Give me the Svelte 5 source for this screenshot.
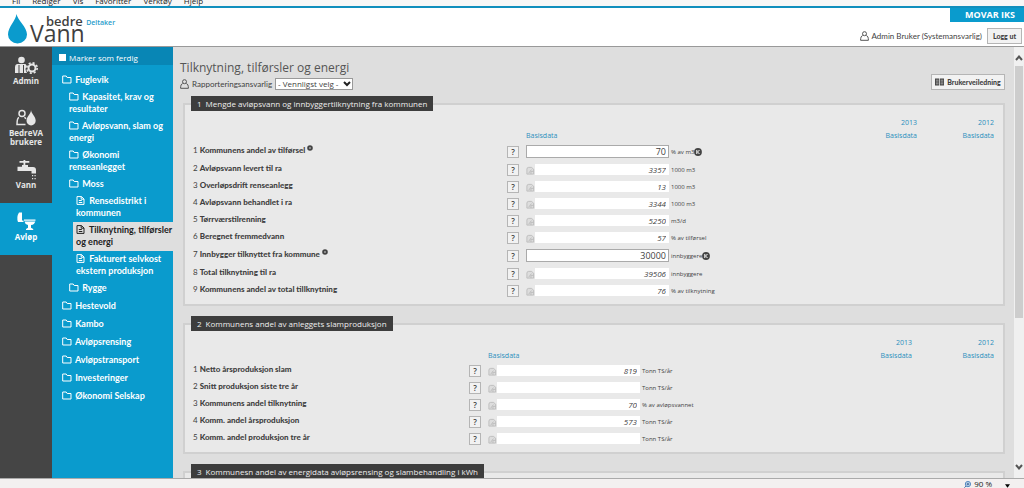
<script lang="ts">
    type Row = { label: string; value: string; unit: string; editable?: boolean };
    type Section = { title: string; layout: string; rows: Row[] };

    const browserMenu = ['Fil', 'Rediger', 'Vis', 'Favoritter', 'Verktøy', 'Hjelp'];

    const modules = [
        { name: 'Admin', icon: 'admin' },
        { name: 'BedreVA brukere', icon: 'users' },
        { name: 'Vann', icon: 'tap' },
        { name: 'Avløp', icon: 'toilet' }
    ];

    const tree = [
        { name: 'Fuglevik', level: 1 },
        { name: 'Kapasitet, krav og resultater', level: 2 },
        { name: 'Avløpsvann, slam og energi', level: 2 },
        { name: 'Økonomi renseanlegget', level: 2 },
        { name: 'Moss', level: 2 },
        { name: 'Rensedistrikt i kommunen', level: 3 },
        { name: 'Tilknytning, tilførsler og energi', level: 3 },
        { name: 'Fakturert selvkost ekstern produksjon', level: 3 },
        { name: 'Rygge', level: 2 },
        { name: 'Hestevold', level: 1 },
        { name: 'Kambo', level: 1 },
        { name: 'Avløpsrensing', level: 1 },
        { name: 'Avløpstransport', level: 1 },
        { name: 'Investeringer', level: 1 },
        { name: 'Økonomi Selskap', level: 1 }
    ];

    const sections: Section[] = [
        {
            title: 'Mengde avløpsvann og innbyggertilknytning fra kommunen',
            layout: 'wide',
            rows: [
                { label: 'Kommunens andel av tilførsel', value: '70', unit: '% av m3', editable: true },
                { label: 'Avløpsvann levert til ra', value: '3357', unit: '1000 m3' },
                { label: 'Overløpsdrift renseanlegg', value: '13', unit: '1000 m3' },
                { label: 'Avløpsvann behandlet i ra', value: '3344', unit: '1000 m3' },
                { label: 'Tørrværstilrenning', value: '5250', unit: 'm3/d' },
                { label: 'Beregnet fremmedvann', value: '57', unit: '% av tilførsel' },
                { label: 'Innbygger tilknyttet fra kommune', value: '30000', unit: 'innbyggere', editable: true },
                { label: 'Total tilknytning til ra', value: '39506', unit: 'innbyggere' },
                { label: 'Kommunens andel av total tillknytning', value: '76', unit: '% av tilknytning' }
            ]
        },
        {
            title: 'Kommunens andel av anleggets slamproduksjon',
            layout: 'narrow',
            rows: [
                { label: 'Netto årsproduksjon slam', value: '819', unit: 'Tonn TS/år' },
                { label: 'Snitt produksjon siste tre år', value: '', unit: 'Tonn TS/år' },
                { label: 'Kommunens andel tilknytning', value: '70', unit: '% av avløpsvannet' },
                { label: 'Komm. andel årsproduksjon', value: '573', unit: 'Tonn TS/år' },
                { label: 'Komm. andel produksjon tre år', value: '', unit: 'Tonn TS/år' }
            ]
        },
        {
            title: 'Kommunesn andel av energidata avløpsrensing og slambehandling i kWh',
            layout: 'narrow',
            rows: []
        }
    ];

    let active = 'Tilknytning, tilførsler og energi';
    let activeModule = 'Avløp';
    let done = false;
</script>

{#snippet person()}
    <svg class="person" viewBox="0 0 9 10" aria-hidden="true">
        <circle cx="4.5" cy="2.7" r="2" />
        <path d="M2.700 4.500C1.200 5 .6 6.500.6 9.300h7.800c0-2.800-.6-4.300-2.100-4.800" />
    </svg>
{/snippet}

<div class="app">
    <div class="browser-menu">
        {#each browserMenu as item}<span>{item}</span>{/each}
    </div>

    <header>
        <a class="logo" href="#hjem">
            <svg viewBox="0 0 20 30" aria-hidden="true">
                <path fill="#0a9bcd" d="M8.500 0C8 6 0 13 0 20.500A9.500 9 0 0 0 19 20.500C19 13 9.500 6 8.500 0Z" />
            </svg>
            <span class="wordmark">
                <span class="bedre">bedre <small>Deltaker</small></span>
                <span class="vann">Vann</span>
            </span>
        </a>
        <div class="account">
            <strong class="company">MOVAR IKS</strong>
            <div class="user">
                {@render person()}
                <span>Admin Bruker (Systemansvarlig)</span>
                <button class="logout">Logg ut</button>
            </div>
        </div>
    </header>

    <div class="body">
        <nav class="modules">
            {#each modules as module}
                <a href="#modul" class:active={module.name === activeModule} on:click|preventDefault={() => (activeModule = module.name)}>
                    <svg viewBox="0 0 24 20" aria-hidden="true">
                        {#if module.icon === 'admin'}
                            <circle cx="7.500" cy="4" r="3.300" />
                            <path d="M3 8h8.500q1 1 1 2.500-1.500 2-.5 4.500l1 2H1V11q0-2.500 2-3Z" />
                            <path d="M5 9v8M9.500 9v8" stroke="#454545" stroke-width="1" />
                            <circle cx="18" cy="12" r="3.500" fill="none" stroke="#e6e6e6" stroke-width="2" />
                            <circle cx="18" cy="12" r="5.200" fill="none" stroke="#e6e6e6" stroke-width="1.600" stroke-dasharray="2.080 2" />
                        {:else if module.icon === 'users'}
                            <circle cx="8" cy="5.500" r="3" fill="none" stroke="#e6e6e6" stroke-width="1.500" />
                            <path d="M5 9.500C3.300 10 3 12 3 16.500h8.500M10.500 9.200l1.500 1.600" fill="none" stroke="#e6e6e6" stroke-width="1.500" />
                            <path d="M17 2c0 4-4.500 6.500-4.500 10.800a4.600 4.700 0 0 0 9.200 0C21.700 8.500 17.500 6 17 2Z" />
                        {:else if module.icon === 'tap'}
                            <path d="M5.500 1h4V0h1.800v1h4v1.700h-4V5H14v2h5q3 0 3 3v3.500h-4.500V11h-14V6.800H8V5h1.500V2.700h-4Z" />
                            <path d="M18 15h1.200v1.200H18zM20.500 15h1.200v1.200h-1.200zM18 18h1.200v1.200H18zM20.500 18h1.200v1.200h-1.200z" />
                        {:else}
                            <path d="M5 .5h3v8H9.500V10H4Q2.200 5 5 .5Z" />
                            <path d="M10 7.500h11.500v1.300H10ZM10.500 9.400h10.800q-.8 3-4.300 3.700v2.600l2.200 1.300v1H12v-1l2-1.300v-2.600q-3-.7-3.500-3.700Z" />
                        {/if}
                    </svg>
                    <span>{module.name}</span>
                </a>
            {/each}
        </nav>

        <aside>
            <label class="mark-done"><input type="checkbox" bind:checked={done} /> Marker som ferdig</label>
            <ul>
                {#each tree as node}
                    <li class="level-{node.level}" class:selected={node.name === active}>
                        <a href="#side" on:click|preventDefault={() => (active = node.name)}>
                            {#if node.level === 3}
                                <svg viewBox="0 0 10 9" aria-hidden="true"><path d="M1 .6h4.500L8 3v5.400H1ZM5.200.6V3.200H8M2.800 4.500h3M2.800 6.500h3.500" /></svg>
                            {:else}
                                <svg viewBox="0 0 10 9" aria-hidden="true"><path d="M.7 8V1h3.500l1 1.500H9V8Z" /></svg>
                            {/if}
                            {node.name}
                        </a>
                    </li>
                {/each}
            </ul>
        </aside>

        <main>
            <div class="page-head">
                <div>
                    <h1>Tilknytning, tilførsler og energi</h1>
                    <div class="responsible">
                        {@render person()}
                        <label for="responsible">Rapporteringsansvarlig</label>
                        <span class="select">
                            <select id="responsible">
                                <option>- Vennligst velg -</option>
                            </select>
                            <svg viewBox="0 0 8 6" aria-hidden="true"><path d="M1 1l3 3 3-3" /></svg>
                        </span>
                    </div>
                </div>
                <button class="guide">
                    <svg viewBox="0 0 10 8" aria-hidden="true">
                        <path fill="#444" d="M0 0h4.600v8H0zM5.400 0H10v8H5.400z" />
                        <path stroke="#ddd" stroke-width=".7" d="M1 2h3M1 4h3M1 6h3M6.200 2h3M6.200 4h3M6.200 6h3" />
                    </svg>
                    Brukerveiledning
                </button>
            </div>

            {#each sections as section, s}
                <fieldset>
                    <legend><span>{s + 1}</span>{section.title}</legend>
                    <table class={section.layout}>
                        <colgroup>
                            <col class="col-label" />
                            <col class="col-help" />
                            <col class="col-field" />
                            <col />
                            <col class="col-year" />
                            <col class="col-last" />
                        </colgroup>
                        <thead>
                            <tr><td colspan="4"></td><th class="year">2013</th><th class="year">2012</th></tr>
                            <tr>
                                <td colspan="2"></td>
                                <th>Basisdata</th>
                                <td></td>
                                <th class="year">Basisdata</th>
                                <th class="year">Basisdata</th>
                            </tr>
                        </thead>
                        <tbody>
                            {#each section.rows as row, i}
                                <tr class:editable={row.editable}>
                                    <td class="name">
                                        <label for="field-{s}-{i}">{i + 1} <b>{row.label}</b></label>
                                        {#if row.editable}
                                            <svg class="required" viewBox="0 0 6 6" aria-hidden="true"><circle cx="3" cy="3" r="1.800" /></svg>
                                        {/if}
                                    </td>
                                    <td><button class="help">?</button></td>
                                    <td>
                                        <div class="field">
                                            {#if !row.editable}
                                                <svg viewBox="0 0 10 9" aria-hidden="true">
                                                    <path fill="#ddd" d="M1 8.500V3q0-2 2-2h3l2.500 2v5.500Z" />
                                                    <path d="M3 7.500l3-4M5.500 8.500V5.500H8.500" />
                                                </svg>
                                            {/if}
                                            <input id="field-{s}-{i}" type="text" value={row.value} readonly={!row.editable} />
                                        </div>
                                    </td>
                                    <td class="unit">
                                        <span>{row.unit}{#if row.editable}<svg viewBox="0 0 8 8" aria-hidden="true">
                                            <circle cx="4" cy="4" r="3.900" fill="#444" />
                                            <path d="M2.800 2v4M5.500 2 3.500 4l2 2" fill="none" stroke="#fff" />
                                        </svg>{/if}</span>
                                    </td>
                                    <td></td>
                                    <td></td>
                                </tr>
                            {/each}
                        </tbody>
                    </table>
                </fieldset>
            {/each}
        </main>

        <div class="scrollbar">
            <svg viewBox="0 0 8 6" aria-hidden="true"><path d="M1 5l3-3.500L7 5" /></svg>
            <div class="track"><div class="thumb"></div></div>
            <svg viewBox="0 0 8 6" aria-hidden="true"><path d="M1 1l3 3.500L7 1" /></svg>
        </div>
    </div>

    <footer>
        <svg class="zoom" viewBox="0 0 8 8" aria-hidden="true">
            <circle cx="4.500" cy="3.500" r="3" fill="#dcebf8" stroke="#3b78b8" />
            <path d="M2.800 3.500h3.400M4.500 1.800v3.400M2.300 5.800.5 7.600" stroke="#24558f" />
        </svg>
        <span>90 %</span>
        <svg class="caret" viewBox="0 0 6 4" aria-hidden="true"><path d="M0 0h6L3 4Z" /></svg>
    </footer>
</div>

<style>
    :global(body) {
        margin: 0;
    }

    .app {
        display: flex;
        flex-direction: column;
        height: 100vh;
        overflow: hidden;
        background: #fff;
        color: #3f3f3f;
        font: 8px/12px "Open Sans", "Noto Sans", sans-serif;
    }

    button,
    input,
    select {
        box-sizing: border-box;
        margin: 0;
        font: inherit;
        color: inherit;
    }

    button {
        padding: 0;
        border: 1px solid #b5b5b5;
        background: #f2f2f2;
    }

    a {
        color: inherit;
        text-decoration: none;
    }

    .browser-menu {
        display: flex;
        align-items: flex-end;
        flex: none;
        gap: 12px;
        height: 6px;
        padding-left: 12px;
        overflow: hidden;
        background: #f7f7f7;
        border-bottom: 2px solid #118fbd;
        color: #222;
        line-height: 11px;
    }

    header {
        display: flex;
        justify-content: space-between;
        flex: none;
        height: 38px;
        border-bottom: 1px solid #999;
    }

    .logo {
        display: flex;
        gap: 2px;
        padding: 6px 0 0 8px;
    }

    .logo svg {
        width: 20px;
        height: 30px;
    }

    .wordmark {
        display: flex;
        flex-direction: column;
        padding-top: 2px;
    }

    .bedre {
        padding-left: 16px;
        font-size: 13px;
        font-weight: 600;
        line-height: 11px;
    }

    .bedre small {
        color: #2a9dcb;
        font-size: 7px;
        vertical-align: 1px;
    }

    .vann {
        font-size: 23px;
        line-height: 10px;
    }

    .account {
        display: flex;
        flex-direction: column;
        align-items: flex-end;
    }

    .company {
        padding: 0 9px 0 15px;
        background: #0a9bcd;
        color: #fff;
        font-size: 9px;
        line-height: 14px;
    }

    .user {
        display: flex;
        align-items: center;
        gap: 3px;
        padding: 6px 2px 0 0;
        font-family: Lato, sans-serif;
    }

    .person {
        flex: none;
        width: 9px;
        height: 10px;
        fill: none;
        stroke: #555;
    }

    .logout {
        width: 35px;
        height: 16px;
        margin-left: 2px;
        font-size: 7px;
        font-weight: 900;
        line-height: 12px;
    }

    .body {
        display: flex;
        flex: 1;
        min-height: 0;
    }

    .modules {
        flex: none;
        width: 52px;
        background: #454545;
    }

    .modules a {
        display: flex;
        flex-direction: column;
        align-items: center;
        box-sizing: border-box;
        height: 52px;
        padding-top: 9px;
        color: #e6e6e6;
        font-weight: bold;
        line-height: 9px;
        text-align: center;
    }

    .modules a.active {
        background: #0a9bcd;
        color: #fff;
    }

    .modules svg {
        flex: none;
        width: 24px;
        height: 20px;
        fill: currentColor;
    }

    aside {
        flex: none;
        width: 121px;
        background: #0a9bcd;
        color: #fff;
    }

    .mark-done {
        display: flex;
        align-items: center;
        gap: 3px;
        height: 18px;
        padding: 3px 0 0 7px;
        box-sizing: border-box;
        background: #0886b5;
    }

    .mark-done input {
        appearance: none;
        width: 7px;
        height: 7px;
        background: #fff;
    }

    .mark-done input:checked {
        border: 2px solid #fff;
        background: #333;
    }

    ul {
        margin: 0;
        padding: 6px 0 0;
        list-style: none;
    }

    li {
        padding: 2px 0 3px;
        font-family: Lato, sans-serif;
        font-size: 9px;
        font-weight: bold;
    }

    li svg {
        width: 10px;
        height: 9px;
        margin-right: 1px;
        fill: none;
        stroke: currentColor;
        vertical-align: -1px;
    }

    .level-1 {
        padding: 3px 0 3px 10px;
    }

    .level-2 {
        padding-right: 8px;
        padding-left: 17px;
    }

    .level-3 {
        margin-left: 21px;
        padding-left: 3px;
    }

    .selected {
        background: #dedede;
        color: #222;
    }

    main {
        flex: 1;
        min-width: 0;
        padding: 12px 9px 0 7px;
        overflow: hidden;
        background: #dedede;
    }

    .page-head {
        display: flex;
        justify-content: space-between;
        align-items: flex-end;
        margin-bottom: 6px;
    }

    h1 {
        margin: 0 0 2px;
        color: #555;
        font-size: 12px;
        font-weight: normal;
        line-height: 17px;
    }

    .responsible {
        display: flex;
        align-items: center;
        gap: 3px;
        height: 12px;
    }

    .responsible label {
        font-family: Lato, sans-serif;
    }

    .select {
        display: grid;
        align-items: center;
        justify-items: end;
    }

    .select > * {
        grid-area: 1 / 1;
    }

    select {
        appearance: none;
        width: 78px;
        height: 12px;
        padding: 0 0 0 2px;
        border: 1px solid #999;
        border-radius: 0;
        background: #fff;
        line-height: 10px;
    }

    .select svg {
        width: 8px;
        height: 6px;
        margin-right: 2px;
        fill: none;
        stroke: #222;
        stroke-width: 2;
        pointer-events: none;
    }

    .guide {
        display: flex;
        align-items: center;
        justify-content: center;
        gap: 3px;
        width: 74px;
        height: 16px;
        font-family: Lato, sans-serif;
        font-size: 7px;
        font-weight: 900;
    }

    .guide svg {
        width: 9px;
        height: 8px;
    }

    fieldset {
        margin: 0 0 10px 3px;
        padding: 0 8px 5px;
        min-width: 0;
        border: 2px solid #d0d0d0;
        background: #e9e9e9;
    }

    legend {
        padding: 0 6px;
        margin-left: -2px;
        background: #3d3d3d;
        color: #eee;
        line-height: 15px;
    }

    legend span {
        margin-right: 4px;
    }

    table {
        width: 100%;
        table-layout: fixed;
        border-collapse: collapse;
    }

    .col-label {
        width: 314px;
    }

    .col-help {
        width: 19px;
    }

    .col-field {
        width: 143px;
    }

    .narrow .col-label {
        width: 276px;
    }

    .narrow .col-field {
        width: 152px;
    }

    .col-year {
        width: 80px;
    }

    .col-last {
        width: 77px;
    }

    .narrow .col-last {
        width: 82px;
    }

    td,
    th {
        box-sizing: border-box;
        height: 17px;
        padding: 0;
        text-align: left;
        white-space: nowrap;
    }

    thead td,
    thead th {
        height: 13px;
        color: #2a8fbd;
        font-size: 7px;
        font-weight: normal;
    }

    thead tr:first-child > * {
        height: 18px;
        vertical-align: bottom;
    }

    th.year {
        padding-right: 1px;
        text-align: right;
    }

    .editable td {
        height: 19px;
    }

    td.name {
        padding-bottom: 3px;
        font-family: Lato, sans-serif;
    }

    .name b {
        font-weight: 900;
    }

    .required {
        width: 6px;
        height: 6px;
        fill: none;
        stroke: #444;
        stroke-width: 2;
        vertical-align: 2px;
    }

    .help {
        display: block;
        width: 12px;
        height: 12px;
        font-weight: 600;
        line-height: 10px;
    }

    .field {
        display: flex;
        align-items: flex-end;
    }

    .field svg {
        flex: none;
        width: 9px;
        height: 9px;
        fill: none;
        stroke: #bbb;
    }

    .field input {
        flex: 1;
        min-width: 0;
        height: 11px;
        padding: 0 3px;
        border: 0;
        background: #fff;
        font-style: italic;
        text-align: right;
    }

    .editable input {
        height: 13px;
        padding: 0 2px;
        border: 1px solid #aaa;
        font-size: 9px;
        font-style: normal;
    }

    .unit {
        padding-left: 2px;
        font-size: 6px;
    }

    .unit span {
        display: flex;
        align-items: center;
    }

    .unit svg {
        width: 8px;
        height: 8px;
    }

    .scrollbar {
        display: flex;
        flex-direction: column;
        align-items: center;
        flex: none;
        width: 10px;
        padding: 8px 0;
        box-sizing: border-box;
        background: #f0f0f0;
    }

    .scrollbar svg {
        width: 8px;
        height: 6px;
        fill: none;
        stroke: #555;
        stroke-width: 2;
    }

    .track {
        flex: 1;
        width: 8px;
        padding: 5px 0;
    }

    .thumb {
        height: 64%;
        background: #cdcdcd;
    }

    footer {
        display: flex;
        align-items: flex-end;
        justify-content: flex-end;
        flex: none;
        gap: 3px;
        height: 9px;
        padding: 0 14px 0 0;
        overflow: hidden;
        border-top: 1px solid #aaa;
        background: #f3f0f0;
        color: #222;
        line-height: 9px;
    }

    .zoom {
        width: 7px;
        height: 7px;
    }

    .caret {
        width: 5px;
        height: 4px;
        margin-left: 10px;
    }
</style>
